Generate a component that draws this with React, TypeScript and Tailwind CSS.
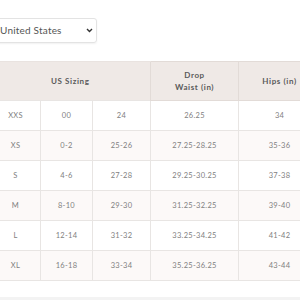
import React from 'react';

interface SizeRow {
  size: string;
  us: string;
  waist: string;
  drop: string;
  hips: string;
}

const rows: SizeRow[] = [
  { size: 'XXS', us: '00', waist: '24', drop: '26.25', hips: '34' },
  { size: 'XS', us: '0-2', waist: '25-26', drop: '27.25-28.25', hips: '35-36' },
  { size: 'S', us: '4-6', waist: '27-28', drop: '29.25-30.25', hips: '37-38' },
  { size: 'M', us: '8-10', waist: '29-30', drop: '31.25-32.25', hips: '39-40' },
  { size: 'L', us: '12-14', waist: '31-32', drop: '33.25-34.25', hips: '41-42' },
  { size: 'XL', us: '16-18', waist: '33-34', drop: '35.25-36.25', hips: '43-44' },
];

const App: React.FC = () => {
  return (
    <div className="w-[300px] h-[300px] overflow-hidden bg-white font-['Lato',sans-serif]">
      {/* Country select */}
      <div className="pt-[18px]">
        <div className="-ml-[8px] w-[105px] h-[25px] flex items-center justify-between pl-[7px] pr-[3px] border border-[#e3e3e3] rounded-[3px] shadow-[0_1px_2px_rgba(0,0,0,0.06)] text-[10px] text-[#555] tracking-[0.2px]">
          <span>United States</span>
          <svg width="7" height="5" viewBox="0 0 7 5" fill="none">
            <path d="M1 1l2.5 2.5L6 1" stroke="#333" strokeWidth="1.4" />
          </svg>
        </div>
      </div>

      {/* Size table */}
      <table className="mt-[18px] -ml-[10px] w-[330px] border-collapse table-fixed text-center">
        <colgroup>
          <col className="w-[50px]" />
          <col className="w-[52px]" />
          <col className="w-[58px]" />
          <col className="w-[88px]" />
          <col className="w-[82px]" />
        </colgroup>
        <thead>
          <tr className="h-[39px] bg-[#efe9e6] text-[8px] font-bold text-[#5a5a5a] tracking-[0.6px] leading-[12px]">
            <th colSpan={3} className="border-t border-[#e9e3e0] font-bold">US Sizing</th>
            <th className="border border-[#e2dbd7] font-bold">
              Drop
              <br />
              Waist (in)
            </th>
            <th className="border border-[#e2dbd7] font-bold">Hips (in)</th>
          </tr>
        </thead>
        <tbody className="text-[7.5px] text-[#808080] tracking-[0.3px]">
          {rows.map((r, i) => (
            <tr key={r.size} className={`h-[30px] ${i % 2 === 1 ? 'bg-[#fcf9f8]' : 'bg-white'}`}>
              <td className="border border-[#e8e5e3]">{r.size}</td>
              <td className="border border-[#e8e5e3]">{r.us}</td>
              <td className="border border-[#e8e5e3]">{r.waist}</td>
              <td className="border border-[#e8e5e3]">{r.drop}</td>
              <td className="border border-[#e8e5e3]">{r.hips}</td>
            </tr>
          ))}
        </tbody>
      </table>

      <div className="mt-[16px] h-[10px] bg-[#f3f3f3]" />
    </div>
  );
};

export default App;
